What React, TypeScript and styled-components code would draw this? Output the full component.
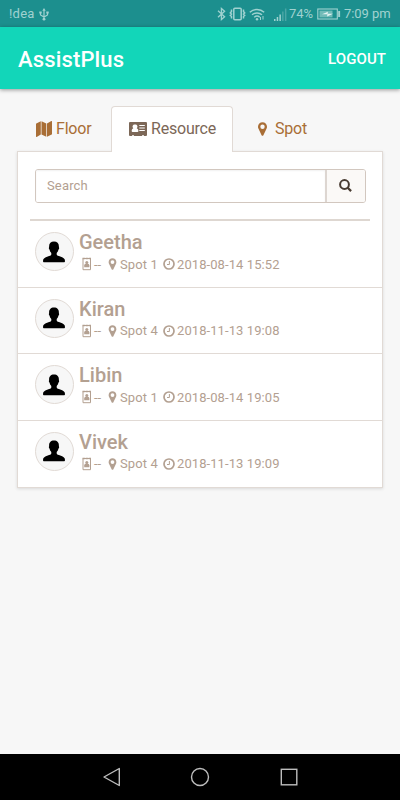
import React from "react";
import styled, { createGlobalStyle } from "styled-components";

const GlobalStyle = createGlobalStyle`
  * { box-sizing: border-box; }
  body { margin: 0; background: #f6f6f6; font-family: Roboto, sans-serif; }
`;

const Screen = styled.div`
  width: 400px;
  height: 800px;
  display: flex;
  flex-direction: column;
  background: #f7f7f7;
  overflow: hidden;
`;

const StatusBar = styled.div`
  height: 27px;
  flex: none;
  display: flex;
  align-items: center;
  padding: 1px 9px 0;
  background: #1c8f8e;
  color: #a0d2d0;
  font-size: 13px;
  line-height: 26px;
  white-space: nowrap;
`;

const Carrier = styled.span`
  letter-spacing: 0.25px;
  margin-right: 4px;
`;

const StatusIcons = styled.div`
  margin-left: auto;
  display: flex;
  align-items: center;
`;

const WifiSlot = styled.span`
  display: flex;
  margin: 0 9px 0 3px;
`;

const Percent = styled.span`
  margin: 0 3px 0 2px;
  width: 25px;
  letter-spacing: -0.1px;
`;

const Time = styled.span`
  margin-left: 3px;
  width: 47px;
  letter-spacing: -0.05px;
`;

const Header = styled.header`
  height: 62px;
  flex: none;
  display: flex;
  align-items: center;
  justify-content: space-between;
  padding: 2px 14px 0 18px;
  background: #12d6b9;
  color: #fff;
  box-shadow: 0 1px 4px rgba(0, 0, 0, 0.4);
`;

const Title = styled.h1`
  margin: 1px 0 0;
  font-size: 22px;
  font-weight: 500;
  letter-spacing: 0.15px;
`;

const Logout = styled.button`
  border: 0;
  padding: 0;
  background: none;
  color: #fff;
  font: 500 15px Roboto, sans-serif;
  letter-spacing: 0.08px;
`;

const Content = styled.main`
  flex: 1;
  padding: 17px 17px 0;
`;

const Tabs = styled.nav`
  display: flex;
  height: 46px;
  margin-bottom: -1px;
`;

const Tab = styled.div<{ $width: number; $inset: number; $gap: number; $active?: boolean }>`
  width: ${(p) => p.$width}px;
  height: 46px;
  display: flex;
  align-items: center;
  gap: ${(p) => p.$gap}px;
  padding: 0 0 2px ${(p) => p.$inset}px;
  font-size: 16px;
  letter-spacing: -0.2px;
  color: ${(p) => (p.$active ? "#7c6757" : "#a96e36")};
  border: 1px solid ${(p) => (p.$active ? "#e1dad5" : "transparent")};
  border-bottom: 0;
  border-radius: 4px 4px 0 0;
  background: ${(p) => (p.$active ? "#fff" : "transparent")};
  z-index: ${(p) => (p.$active ? 1 : 0)};
  svg { flex: none; }
`;

const Card = styled.section`
  width: 366px;
  height: 336.500px;
  background: #fff;
  border: 1px solid #e1dad5;
  box-shadow: 0 1px 3px rgba(0, 0, 0, 0.12);
`;

const Search = styled.div`
  display: flex;
  height: 34px;
  width: 331px;
  margin: 17px 0 0 17px;
  border: 1px solid #d2c7bf;
  border-radius: 3px;
  overflow: hidden;
`;

const SearchInput = styled.input`
  flex: 1;
  min-width: 0;
  border: 0;
  outline: 0;
  padding: 0 11px 1px;
  background: #fff;
  box-shadow: inset 0 1px 2px rgba(0, 0, 0, 0.06);
  color: #7c6757;
  font: 13px Roboto, sans-serif;
  letter-spacing: 0.15px;
  &::placeholder { color: #b3a091; opacity: 1; }
`;

const SearchButton = styled.button`
  width: 40px;
  padding: 0 2px 1px 0;
  display: flex;
  align-items: center;
  justify-content: center;
  border: 0;
  border-left: 2px solid #ddd6d1;
  background: #fbf9f7;
  color: #483b31;
`;

const Divider = styled.div`
  height: 2px;
  margin: 16px 12px 0;
  background: #ded7d1;
`;

const List = styled.ul`
  list-style: none;
  margin: 0;
  padding: 0;
`;

const Row = styled.li`
  height: 66.6px;
  display: flex;
  padding: 11px 0 0 16.5px;
  color: #b3a091;
  border-bottom: 1px solid #e1dad5;
  &:last-child { border-bottom: 0; }
`;

const Avatar = styled.div`
  width: 39px;
  height: 39px;
  flex: none;
  display: flex;
  align-items: center;
  justify-content: center;
  border: 1px solid #e1dad5;
  border-radius: 50%;
  background: #f7f7f7;
`;

const Details = styled.div`
  margin-left: 5.5px;
`;

const Name = styled.h2`
  margin: -2px 0 0;
  font-size: 20px;
  line-height: 24px;
  font-weight: 500;
`;

const Meta = styled.div`
  height: 19px;
  display: flex;
  align-items: center;
  font-size: 13px;
  line-height: 19px;
  white-space: nowrap;
  padding: 1px 0 0 3px;
  svg { flex: none; }
`;

const Badge = styled.span`
  width: 26px;
  display: flex;
  align-items: center;
  gap: 2px;
  letter-spacing: -0.1px;
`;

const Place = styled.span`
  width: 55px;
  display: flex;
  align-items: center;
  gap: 3px;
  letter-spacing: 0.1px;
`;

const When = styled.span`
  display: flex;
  align-items: center;
  gap: 2px;
  letter-spacing: 0.08px;
`;

const NavBar = styled.footer`
  height: 46px;
  flex: none;
  display: flex;
  justify-content: center;
  align-items: center;
  gap: 68.500px;
  background: #000;
`;

const MapIcon = () => (
  <svg width="16" height="16" viewBox="0 0 16 16" fill="currentColor">
    <path d="M4.800.2v13.300L.7 15.900C.3 16.100 0 15.900 0 15.500V3c0-.3.100-.5.300-.6zM5.500.2l4.800 2.400v13.200l-4.800-2.400zM15.300.1c.4-.2.700 0 .7.400V13c0 .3-.1.500-.3.600L11 15.800V2.500z" />
  </svg>
);

const Marker = ({ width, height }: { width: number; height: number }) => (
  <svg width={width} height={height} viewBox="0 0 9 14" fill="currentColor" fillRule="evenodd">
    <path d="M4.500.3C2 .3 0 2.200 0 4.700c0 .8.1 1.400.4 1.900l3.200 6.700c.4.700 1.400.7 1.800 0l3.200-6.700c.3-.5.400-1.100.4-1.900C9 2.200 7 .3 4.500.3zm0 2.200a2.200 2.200 0 1 1 0 4.400 2.200 2.200 0 0 1 0-4.400z" />
  </svg>
);

const AddressCard = () => (
  <svg width="18" height="14" viewBox="0 0 18 14" fill="currentColor" fillRule="evenodd">
    <path d="M1.300 0h15.400C17.500 0 18 .5 18 1.300v11.400c0 .8-.5 1.300-1.300 1.300H15v-.8h-2v.8H5v-.8H3v.8H1.300C.5 14 0 13.500 0 12.700V1.300C0 .5.500 0 1.300 0zM6 2.500a2.100 2.100 0 0 0-1.700 3.700C3.300 6.600 2.700 7.500 2.700 9c0 .6.300.9.900.9h4.900c.6 0 .9-.3.900-.9 0-1.500-.6-2.400-1.700-2.800A2.100 2.100 0 0 0 6 2.500zM10.300 3v1h5.500V3zm0 2.500v1h5.500v-1zm0 2.500v1h5.500V8z" />
  </svg>
);

const IdBadge = () => (
  <svg width="10" height="14" viewBox="0 0 10 14">
    <path d="M1 1.500h7.500v11.200H1z" fill="none" stroke="currentColor" />
    <path d="M.5.700h2.400v1.600H.5zM3.600.700h2.300v1.600H3.600zM6.600.700H9v1.600H6.600z" fill="currentColor" />
    <circle cx="4.800" cy="5.500" r="1.500" fill="currentColor" />
    <path d="M2.200 10.300V8.600c0-1 .6-1.600 1.400-1.800H6c.8.200 1.400.8 1.400 1.800v1.700z" fill="currentColor" />
  </svg>
);

const Clock = () => (
  <svg width="12" height="12" viewBox="0 0 12 12" fill="none" stroke="currentColor">
    <circle cx="6" cy="6" r="5" strokeWidth="1.700" />
    <path d="M6.400 3v3.500H4" strokeWidth="1" />
  </svg>
);

const Person = () => (
  <svg width="23" height="22" viewBox="0.5 0 23 22" fill="#000">
    <path d="M11.500.5C8.300.5 6.400 2.400 6.600 6c0 .6-.4.8-.2 1.500.1.700.5.900.7 1.300.3 1.500 1 2.500 1.700 3.200v1.600c-.2 1.100-1.700 1.300-3.500 1.900C2.400 16.500.5 17.400.5 20c0 .9.400 1.300 1.200 1.300h19.600c.8 0 1.200-.4 1.200-1.300 0-2.600-1.900-3.500-4.800-4.500-1.800-.6-3.300-.8-3.500-1.900V12c.7-.7 1.400-1.700 1.700-3.200.2-.4.600-.6.700-1.300.2-.7-.2-.9-.2-1.500.2-3.600-1.700-5.500-4.900-5.500z" />
  </svg>
);

const Magnifier = () => (
  <svg width="13" height="13" viewBox="0 0 13 13" fill="none" stroke="currentColor" strokeWidth="2">
    <circle cx="5.500" cy="5.500" r="4.400" />
    <path d="M8.700 8.700l3.400 3.400" strokeWidth="2.200" />
  </svg>
);

const Usb = () => (
  <svg width="10" height="13" viewBox="0 0 10 13" fill="none" stroke="currentColor">
    <path d="M5 2v9M1.500 4.500V7L5 9l3.500-2V4.500" strokeWidth="1.200" />
    <path d="M3.300 2.800L5 0l1.700 2.800zM.3 3.500h2.400v2H.3zM7.300 3.500h2.400v2H7.300z" fill="currentColor" stroke="none" />
    <circle cx="5" cy="11.200" r="1.400" fill="currentColor" stroke="none" />
  </svg>
);

const Bluetooth = () => (
  <svg width="12" height="14" viewBox="0 0 12 14" fill="none" stroke="currentColor" strokeWidth="1.300">
    <path d="M1 3.800l6.600 6L4.400 12.500v-11l3.200 2.700L1 10.200" />
  </svg>
);

const Vibrate = () => (
  <svg width="17" height="14" viewBox="0 0 17 14" fill="none" stroke="currentColor">
    <rect x="4.800" y="1.200" width="7.400" height="11.600" rx="1" strokeWidth="1.500" />
    <path d="M2.500 2.500v2L1.300 6l1.200 1-1.200 1.500 1.200 1v2M14.500 2.500v2L15.700 6l-1.200 1 1.200 1.500-1.200 1v2" strokeWidth="1.500" />
  </svg>
);

const Wifi = () => (
  <svg width="16" height="14" viewBox="0 0 16 14" fill="none" stroke="currentColor" strokeWidth="1.400">
    <path d="M.8 5.200c4-3.700 10.400-3.700 14.400 0M3 7.800c2.800-2.500 7.200-2.500 10 0M5.200 10.200c1.600-1.400 4-1.400 5.600 0" />
    <circle cx="8" cy="12.200" r="1.200" fill="currentColor" stroke="none" />
    <path d="M11.500 13v-3M14 9v3.500" strokeWidth="1" />
  </svg>
);

const Signal = () => (
  <svg width="13" height="13" viewBox="0 0 13 13" fill="currentColor">
    <path d="M0 11h1.500v2H0zM2.700 9h1.500v4H2.700zM5.400 6.500h1.500V13H5.400z" />
    <path d="M8.100 3.500h1.500V13H8.100zM10.900.5h1.500V13h-1.500z" opacity=".35" />
  </svg>
);

const Battery = () => (
  <svg width="24" height="12" viewBox="0 0 24 12">
    <rect x=".8" y="1" width="19.500" height="10" fill="none" stroke="currentColor" strokeWidth="1.100" />
    <rect x="2.500" y="2.600" width="13" height="6.800" fill="currentColor" opacity=".65" />
    <path d="M5 6.200l6-2.500-.5 2H16l-6 2.800.5-2.300z" fill="#e4f4f2" />
    <path d="M21.200 3h1.900v6h-1.900z" fill="currentColor" />
  </svg>
);

const BackIcon = () => (
  <svg width="20" height="20" viewBox="0 0 20 20" fill="none" stroke="#bdbdbd" strokeWidth="1.400" strokeLinejoin="round">
    <path d="M17.300 1.500v17L2 10z" />
  </svg>
);

const HomeIcon = () => (
  <svg width="20" height="20" viewBox="0 0 20 20" fill="none" stroke="#bdbdbd" strokeWidth="1.400">
    <circle cx="10" cy="10" r="8.500" />
  </svg>
);

const RecentIcon = () => (
  <svg width="20" height="20" viewBox="0 0 20 20" fill="none" stroke="#bdbdbd" strokeWidth="1.400">
    <rect x="2.300" y="2.300" width="15.500" height="15.500" />
  </svg>
);

const people = [
  { name: "Geetha", spot: "Spot 1", time: "2018-08-14 15:52" },
  { name: "Kiran", spot: "Spot 4", time: "2018-11-13 19:08" },
  { name: "Libin", spot: "Spot 1", time: "2018-08-14 19:05" },
  { name: "Vivek", spot: "Spot 4", time: "2018-11-13 19:09" },
];

export default function App() {
  return (
    <Screen>
      <GlobalStyle />
      <StatusBar>
        <Carrier>!dea</Carrier>
        <Usb />
        <StatusIcons>
          <Bluetooth />
          <Vibrate />
          <WifiSlot><Wifi /></WifiSlot>
          <Signal />
          <Percent>74%</Percent>
          <Battery />
          <Time>7:09 pm</Time>
        </StatusIcons>
      </StatusBar>
      <Header>
        <Title>AssistPlus</Title>
        <Logout>LOGOUT</Logout>
      </Header>
      <Content>
        <Tabs>
          <Tab $width={94} $inset={18} $gap={4}><MapIcon />Floor</Tab>
          <Tab $width={122} $inset={17} $gap={4} $active><AddressCard />Resource</Tab>
          <Tab $width={110} $inset={24} $gap={8}><Marker width={9} height={14} />Spot</Tab>
        </Tabs>
        <Card>
          <Search>
            <SearchInput placeholder="Search" />
            <SearchButton aria-label="Search"><Magnifier /></SearchButton>
          </Search>
          <Divider />
          <List>
            {people.map((p) => (
              <Row key={p.name}>
                <Avatar><Person /></Avatar>
                <Details>
                  <Name>{p.name}</Name>
                  <Meta>
                    <Badge><IdBadge />--</Badge>
                    <Place><Marker width={9} height={12} />{p.spot}</Place>
                    <When><Clock />{p.time}</When>
                  </Meta>
                </Details>
              </Row>
            ))}
          </List>
        </Card>
      </Content>
      <NavBar>
        <BackIcon />
        <HomeIcon />
        <RecentIcon />
      </NavBar>
    </Screen>
  );
}
